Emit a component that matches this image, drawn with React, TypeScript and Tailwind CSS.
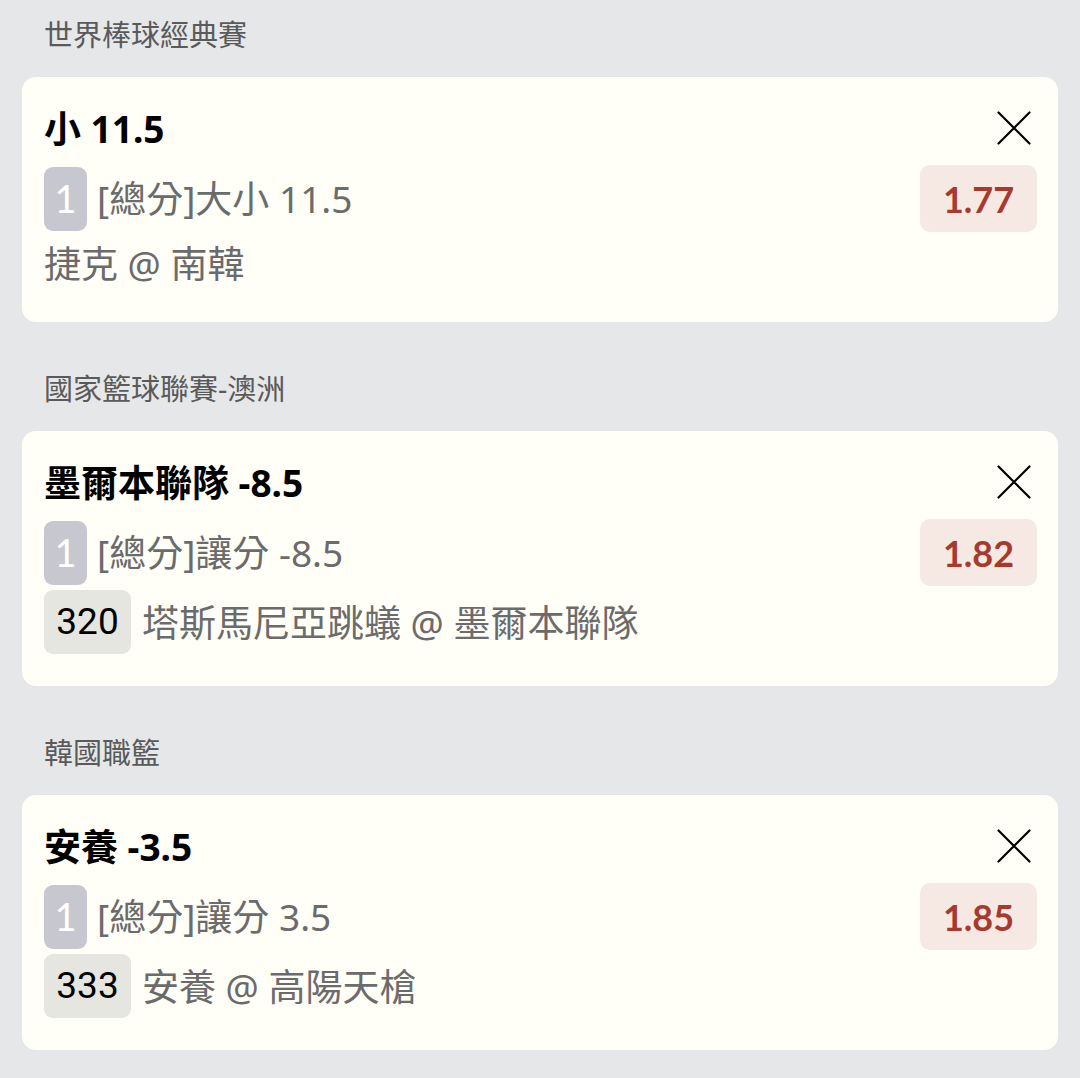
interface Bet {
  league: string;
  title: string;
  market: string;
  odds: string;
  code?: string;
  teams: string;
}

const bets: Bet[] = [
  { league: '世界棒球經典賽', title: '小 11.5', market: '[總分]大小 11.5', odds: '1.77', teams: '捷克 @ 南韓' },
  { league: '國家籃球聯賽-澳洲', title: '墨爾本聯隊 -8.5', market: '[總分]讓分 -8.5', odds: '1.82', code: '320', teams: '塔斯馬尼亞跳蟻 @ 墨爾本聯隊' },
  { league: '韓國職籃', title: '安養 -3.5', market: '[總分]讓分 3.5', odds: '1.85', code: '333', teams: '安養 @ 高陽天槍' },
];

const sans = "font-['Noto_Sans','Noto_Sans_CJK_TC',sans-serif]";

const CloseIcon = () => (
  <svg width="34" height="34" viewBox="0 0 34 34" fill="none" stroke="currentColor" strokeWidth={2.2} strokeLinecap="round">
    <path d="M1.5 1.5L32.5 32.5M32.5 1.5L1.5 32.5" />
  </svg>
);

const BetCard = ({ bet }: { bet: Bet }) => (
  <div className="mx-[22px] mb-[32px] rounded-[14px] bg-[#fffef7] pt-[24px] pb-[32px] pl-[22px] pr-[21px]">
    {/* Title row */}
    <div className="flex h-[54px] items-center justify-between">
      <h2 className={`${sans} text-[37px] font-bold leading-none text-black`}>{bet.title}</h2>
      <button className="mr-[6px] flex h-[34px] w-[34px] items-center justify-center text-black">
        <CloseIcon />
      </button>
    </div>

    {/* Market + odds */}
    <div className="mt-[10px] flex h-[67px] items-center justify-between">
      <div className="flex items-center gap-[10px]">
        <span className="flex h-[64px] w-[43px] items-center justify-center rounded-[9px] bg-[#c7c7cf] font-['Lato',sans-serif] text-[38px] text-white">
          1
        </span>
        <span className={`${sans} text-[37px] leading-none text-[#6b6b6b]`}>{bet.market}</span>
      </div>
      <div className="flex h-[67px] w-[117px] items-center justify-center rounded-[10px] bg-[#f6e8e2] font-['Lato',sans-serif] text-[36px] font-bold text-[#a63a2f]">
        {bet.odds}
      </div>
    </div>

    {/* Teams */}
    {bet.code ? (
      <div className="mt-[4px] flex h-[64px] items-center gap-[11px]">
        <span className="flex h-[64px] w-[87px] items-center justify-center rounded-[9px] bg-[#e6e6e0] font-['Roboto',sans-serif] text-[37px] text-black">
          {bet.code}
        </span>
        <span className={`${sans} text-[37px] leading-none text-[#6b6b6b]`}>{bet.teams}</span>
      </div>
    ) : (
      <div className="mt-[4px] flex h-[54px] items-center">
        <span className={`${sans} text-[37px] leading-none text-[#6b6b6b]`}>{bet.teams}</span>
      </div>
    )}
  </div>
);

export default function App() {
  return (
    <div className="min-h-[1078px] w-[1080px] bg-[#e6e7e9]">
      {bets.map((bet) => (
        <section key={bet.league}>
          <div className={`${sans} px-[44px] pt-[14px] pb-[22px] text-[29px] leading-[41px] text-[#5a5a5a]`}>
            {bet.league}
          </div>
          <BetCard bet={bet} />
        </section>
      ))}
    </div>
  );
}
